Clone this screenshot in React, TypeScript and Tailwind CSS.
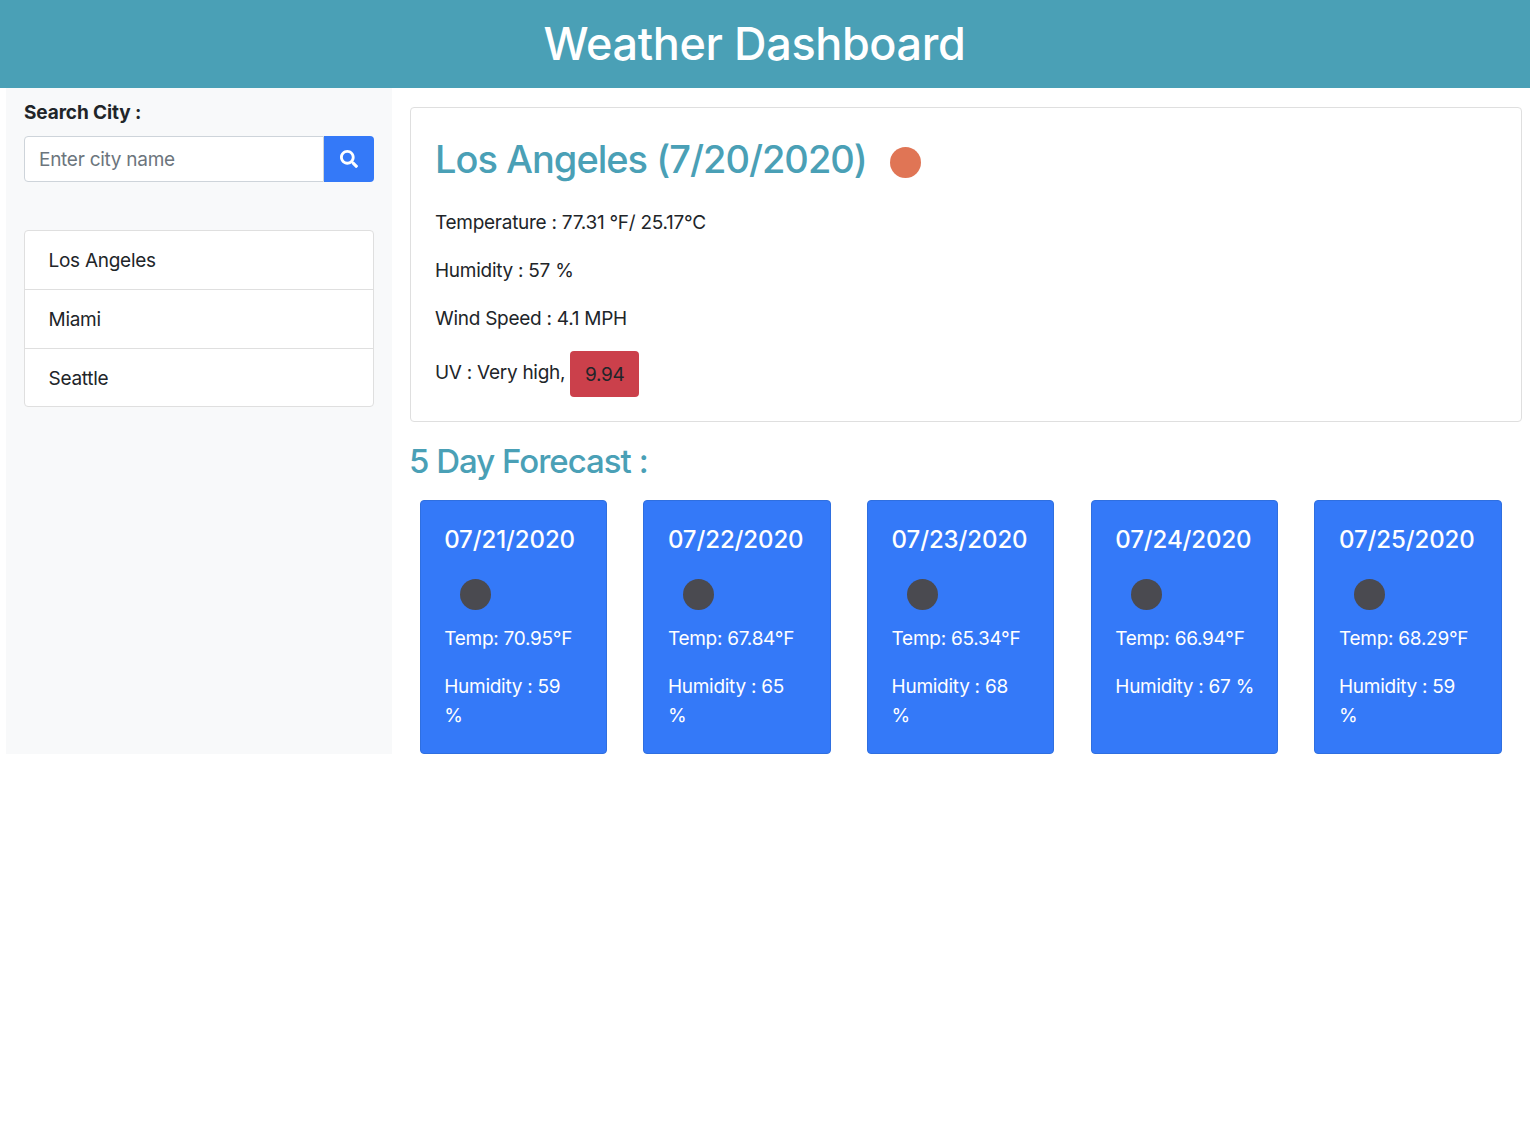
import { FaSearch } from "react-icons/fa";

const days = [
  { d: "07/21/2020", t: "70.95", h: "59" },
  { d: "07/22/2020", t: "67.84", h: "65" },
  { d: "07/23/2020", t: "65.34", h: "68" },
  { d: "07/24/2020", t: "66.94", h: "67" },
  { d: "07/25/2020", t: "68.29", h: "59" },
];

export default function App() {
  return (
    <div className="min-h-[1131px] bg-white text-[#212529] text-[19px] leading-[29px] tracking-[-0.27px]" style={{ fontFamily: "Inter, 'Noto Sans', sans-serif" }}>
      <header className="h-[88px] bg-[#4aa0b6] text-white flex items-center justify-center pr-[21px]">
        <h1 className="text-[45px] leading-[54px] font-medium tracking-[-0.38px]">Weather Dashboard</h1>
      </header>
      <div className="flex items-start pl-[6px] pr-[8px]">
        <aside className="w-[386px] h-[666px] shrink-0 bg-[#f8f9fa] pl-[18px] pr-[18px] pt-[10px]">
          <label className="block font-bold mb-[9px] tracking-[-0.1px]">Search City :</label>
          <div className="flex h-[46px]">
            <div className="flex-1 bg-white border border-[#ced4da] rounded-l-[4px] flex items-center pl-[14px] text-[#6c757d]">Enter city name</div>
            <button className="w-[50px] bg-[#3479f8] rounded-r-[4px] flex items-center justify-center">
              <FaSearch size={18} color="#fff" />
            </button>
          </div>
          <ul className="mt-[48px] bg-white border border-[#dfdfdf] rounded-[4px]">
            <li className="h-[59px] flex items-center pl-[23.5px] border-b border-[#dfdfdf]">Los Angeles</li>
            <li className="h-[59px] flex items-center pl-[23.5px] border-b border-[#dfdfdf]">Miami</li>
            <li className="h-[57px] flex items-center pl-[23.5px] pt-[1px]">Seattle</li>
          </ul>
        </aside>
        <main className="flex-1 pl-[18px] pt-[19px]">
          <section className="h-[315px] border border-[#dfdfdf] rounded-[4px] pl-[24px] pt-[24px]">
            <div className="flex items-center h-[53px]">
              <h2 className="text-[38px] leading-[46px] font-medium text-[#4aa0b6] tracking-[-1px]">Los Angeles (7/20/2020)</h2>
              <span className="ml-[23px] mt-[7px] w-[31px] h-[31px] rounded-full bg-[#e07555]" />
            </div>
            <p className="mt-[23px]">Temperature : 77.31 °F/ 25.17°C</p>
            <p className="mt-[19px]">Humidity : 57 %</p>
            <p className="mt-[19px]">Wind Speed : 4.1 MPH</p>
            <p className="mt-[14px] flex items-center">
              UV : Very high,
              <span className="ml-[5px] mt-[4px] w-[69px] h-[46px] rounded-[4px] bg-[#cb404b] flex items-center justify-center">9.94</span>
            </p>
          </section>
          <h3 className="mt-[19px] -ml-[1px] text-[33px] leading-[40px] font-medium text-[#4aa0b6] tracking-[-1px]">5 Day Forecast :</h3>
          <div className="mt-[19px] flex justify-between pl-[9.6px] pr-[20.2px]">
            {days.map((x) => (
              <div key={x.d} className="w-[187.4px] h-[254px] bg-[#3479f8] border border-[#2f6fe0] rounded-[4px] text-white pl-[23.6px] pr-[22.8px] pt-[24px]">
                <div className="text-[24px] leading-[29px] font-medium tracking-[-0.1px]">{x.d}</div>
                <div className="ml-[15.4px] mt-[25px] w-[31px] h-[31px] rounded-full bg-[#4a4a50]" />
                <p className="mt-[14px]">Temp: {x.t}°F</p>
                <p className="mt-[19px]">Humidity : {x.h} %</p>
              </div>
            ))}
          </div>
        </main>
      </div>
    </div>
  );
}
